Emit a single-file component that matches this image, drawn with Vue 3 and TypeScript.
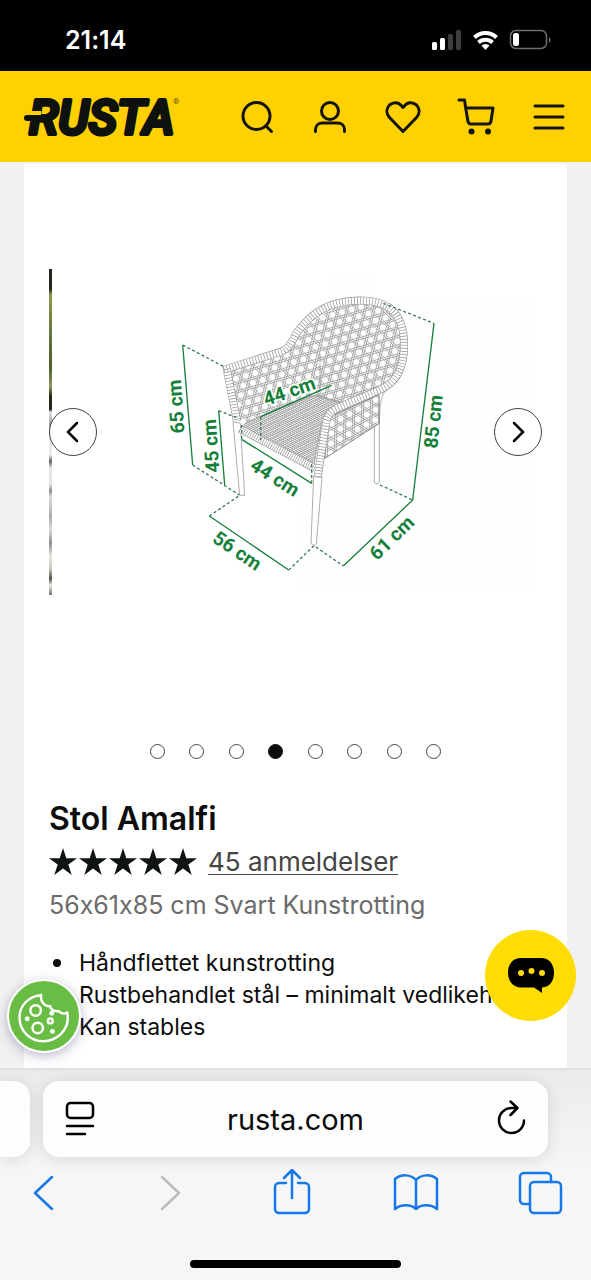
<script setup lang="ts">
import { ref } from 'vue'

const slideCount = 8
const current = ref(3)
const move = (step: number) => {
  current.value = (current.value + step + slideCount) % slideCount
}

const address = ref('rusta.com')
const features: string[] = [
  'Håndflettet kunstrotting',
  'Rustbehandlet stål – minimalt vedlikeh',
  'Kan stables',
]

interface Measure { text: string; x: number; y: number; angle: number }
const measures: Measure[] = [
  { text: '65 cm', x: 78, y: 440, angle: -94 },
  { text: '45 cm', x: 183, y: 558, angle: -94 },
  { text: '44 cm', x: 418, y: 393, angle: -19 },
  { text: '44 cm', x: 375, y: 652, angle: 32 },
  { text: '56 cm', x: 262, y: 872, angle: 34 },
  { text: '61 cm', x: 725, y: 833, angle: -44 },
  { text: '85 cm', x: 850, y: 485, angle: -84 },
]

// Paired strands in three directions leave the hexagonal holes of woven cane.
function weave(cx: number, cy: number, tilt: number, spacing: number, gap: number): string {
  const reach = 340
  const parts: string[] = []
  ;[0, 60, 120].forEach((turn, family) => {
    const a = ((tilt + turn) * Math.PI) / 180
    const dx = Math.cos(a)
    const dy = Math.sin(a)
    for (let k = -14; k <= 14; k++) {
      for (const side of [-1, 1]) {
        const off = (k + (family === 1 ? 0.5 : 0)) * spacing + side * gap
        const x = cx - dy * off
        const y = cy + dx * off
        parts.push(
          `M${(x - dx * reach).toFixed(1)} ${(y - dy * reach).toFixed(1)}L${(x + dx * reach).toFixed(1)} ${(y + dy * reach).toFixed(1)}`,
        )
      }
    }
  })
  return parts.join('')
}
const backWeave = weave(500, 300, -16, 26, 3)
const sideWeave = weave(610, 500, -28, 26, 3)
</script>

<template>
  <div class="phone">
    <div class="status">
      <span class="time">21:14</span>
      <svg class="status-icons" viewBox="0 0 120 24" width="120" height="24" aria-hidden="true">
        <rect x="0" y="14" width="5" height="8" rx="1.5" fill="#fff" />
        <rect x="8" y="10" width="5" height="12" rx="1.5" fill="#fff" />
        <rect x="16" y="6" width="5" height="16" rx="1.5" fill="#3c3c3c" />
        <rect x="24" y="2" width="5" height="20" rx="1.5" fill="#3c3c3c" />
        <g fill="none" stroke="#fff" stroke-width="4">
          <path d="M42.500 9.500a16 16 0 0 1 22 0" />
          <path d="M46.500 14.500a10.500 10.500 0 0 1 14 0" />
        </g>
        <path d="M49.500 17.500a6 6 0 0 1 8 0L53.500 22z" fill="#fff" />
        <rect x="78.500" y="2.500" width="36" height="18" rx="5.500" fill="none" stroke="#6e6e6e" stroke-width="1.500" />
        <path d="M117 9v6c2-1 2-5 0-6z" fill="#6e6e6e" />
        <rect x="81" y="5" width="6" height="13" rx="2.500" fill="#fff" />
      </svg>
    </div>

    <header class="header">
      <a class="brand" href="#" aria-label="Rusta">
        <svg viewBox="0 0 170 64" width="170" height="64">
          <text class="wordmark" x="7" y="49">RUSTA</text>
          <path d="M2 31H19" stroke="#ffd103" stroke-width="10" />
          <path d="M5 33H26" stroke="#0d120e" stroke-width="6" stroke-linecap="round" />
          <text class="registered" x="151" y="19">®</text>
        </svg>
      </a>
      <nav class="tools" aria-label="Butikk">
        <button type="button" aria-label="Søk">
          <svg viewBox="0 0 40 40"><ellipse cx="19.500" cy="19" rx="13.500" ry="13.500" /><path d="M29 29l5.500 5.500" /></svg>
        </button>
        <button type="button" aria-label="Min side">
          <svg viewBox="0 0 40 40"><circle cx="20" cy="14" r="8.500" /><path d="M5.500 34.500v-2c0-4 3-6.500 7-6.500h15c4 0 7 2.500 7 6.500v2" /></svg>
        </button>
        <button type="button" aria-label="Favoritter">
          <svg viewBox="0 0 40 40"><path d="M20 34.500L6.500 20.500C3 16.500 3 11.500 6.500 8c4-3.500 9-3 12 .8L20 10.500l1.500-1.700c3-3.800 8-4.300 12-.8 3.500 3.500 3.500 8.500 0 12.500z" /></svg>
        </button>
        <button type="button" aria-label="Handlekurv">
          <svg viewBox="0 0 40 40"><path d="M3 3h5.500l1.200 8M9.700 11H37l-2 13c-.3 2-1.200 3-3 3H15c-1.800 0-2.800-1-3.100-3z" /><circle class="solid" cx="15.500" cy="34.500" r="3" /><circle class="solid" cx="32" cy="34.500" r="3" /></svg>
        </button>
        <button type="button" aria-label="Meny">
          <svg viewBox="0 0 40 40"><path d="M6 9h28M6 20h28M6 31h28" /></svg>
        </button>
      </nav>
    </header>

    <main class="page">
      <article class="card">
        <section class="stage" aria-label="Produktbilder">
          <div class="previous-slide"></div>
          <svg class="slide" viewBox="-294 27 1470 978" role="img" aria-label="Målskisse av Stol Amalfi">
            <defs>
              <clipPath id="backShape">
                <path d="M238 334L400 286Q425 277 446 232C475 190 520 158 562 143C615 128 675 130 710 152C745 178 756 225 751 278C744 330 724 365 680 384L585 432L492 405L290 486L263 478z" />
              </clipPath>
              <clipPath id="sideShape">
                <path d="M538 470L687 404L688 490L523 596L525 500z" />
              </clipPath>
              <pattern id="seat" width="10" height="7" patternUnits="userSpaceOnUse" patternTransform="matrix(0.880 0.480 -0.900 0.420 0 0)">
                <path d="M0 2H10" stroke="#555" stroke-width="2" /><path d="M2 0V7" stroke="#888" stroke-width="1.500" />
              </pattern>
            </defs>
            <path d="M150 390H240V40H370V120H852V990H150z" transform="translate(300 0)" fill="#fefefe" />

            <g fill="#fff" stroke="#999" stroke-width="2.400" stroke-linejoin="round">
              <path d="M706 392C690 415 689 440 688 490V666Q681 678 673 666V500L668 420" />
              <path d="M249 485L269 706H284L271 490z" />
            </g>
            <g clip-path="url(#backShape)">
              <path :d="backWeave" fill="none" stroke="#757575" stroke-width="1.500" />
            </g>
            <path d="M492 406L585 433L535 465L515 490L492 612L276 500L290 486z" fill="#fff" />
            <path d="M492 406L585 433L535 465L515 490L492 612L276 500L290 486z" fill="url(#seat)" stroke="#888" stroke-width="2" />
            <path d="M510 280V395M500 405L590 432" stroke="#888" stroke-width="2" fill="none" />
            <path d="M538 470L687 404L688 490L523 596L525 500z" fill="#fff" stroke="#888" stroke-width="3" />
            <g clip-path="url(#sideShape)">
              <path :d="sideWeave" fill="none" stroke="#757575" stroke-width="1.500" />
            </g>

            <g fill="none">
              <g stroke="#999" stroke-width="24">
                <path d="M220 330L396 274Q418 266 437 224C465 182 508 146 558 131C616 116 680 118 718 143C754 170 766 220 761 280C756 335 735 370 688 390L558 446Q532 458 528 488L503 650" />
                <path d="M230 325L261 484" /><path d="M270 506L494 625" />
              </g>
              <g stroke="#fff" stroke-width="20">
                <path d="M222 329L396 274Q418 266 437 224C465 182 508 146 558 131C616 116 680 118 718 143C754 170 766 220 761 280C756 335 735 370 688 390L558 446Q532 458 528 488L503 648" />
                <path d="M230 327L261 483" /><path d="M271 507L493 624" />
              </g>
              <g stroke="#909090" stroke-width="21" stroke-dasharray="2 7">
                <path d="M222 329L396 274Q418 266 437 224C465 182 508 146 558 131C616 116 680 118 718 143C754 170 766 220 761 280C756 335 735 370 688 390L558 446Q532 458 528 488L503 648" />
                <path d="M230 327L261 483" /><path d="M271 507L493 624" stroke-dasharray="2 5" />
              </g>
            </g>
            <path d="M491 650L483 848Q491 862 499 852L516 652z" fill="#fff" stroke="#999" stroke-width="2.400" />

            <g class="dash">
              <path d="M98 255L222 320M128 615L268 705M206 452L265 475M275 495V538M485 670V612M332 470V540M178 768L268 707M416 930L492 857L580 918M700 130L852 190M690 675L788 720" />
            </g>
            <g class="rule">
              <path d="M98 255L128 615M206 452L224 675M275 538L485 670M332 470L545 376M178 768L416 930M580 918L788 720L852 190" />
            </g>
            <text
              v-for="(m, i) in measures"
              :key="i"
              class="measure"
              :transform="`translate(${m.x} ${m.y}) rotate(${m.angle})`"
              y="20"
            >{{ m.text }}</text>
          </svg>
          <button class="arrow left" type="button" aria-label="Forrige bilde" @click="move(-1)">
            <svg viewBox="0 0 24 24"><path d="M16 3L7 12l9 9" /></svg>
          </button>
          <button class="arrow right" type="button" aria-label="Neste bilde" @click="move(1)">
            <svg viewBox="0 0 24 24"><path d="M8 3l9 9-9 9" /></svg>
          </button>
        </section>

        <div class="dots">
          <button
            v-for="n in slideCount"
            :key="n"
            type="button"
            :class="{ active: n - 1 === current }"
            :aria-label="`Bilde ${n}`"
            @click="current = n - 1"
          ></button>
        </div>

        <h1>Stol Amalfi</h1>
        <div class="rating">
          <span class="stars" role="img" aria-label="5 av 5 stjerner">
            <svg v-for="n in 5" :key="n" viewBox="0 0 28 27" width="28" height="27">
              <path d="M14 0l3.300 10.300H28l-8.700 6.300L22.700 27 14 20.600 5.300 27l3.400-10.400L0 10.300h10.700z" />
            </svg>
          </span>
          <a href="#">45 anmeldelser</a>
        </div>
        <p class="variant">56x61x85 cm Svart Kunstrotting</p>
        <ul class="features">
          <li v-for="f in features" :key="f">{{ f }}</li>
        </ul>
      </article>

      <button class="cookie" type="button" aria-label="Informasjonskapsler">
        <svg viewBox="0 0 100 100" fill="none" stroke="#fff" stroke-width="3.500">
          <path d="M46 20C28 22 15 35 15 52c0 19 15 34 34 34s35-15 35-33c0-3 0-5-1-8-4 2-9 2-12-2-7 1-12-3-12-7-8 1-15-7-13-16z" stroke-linejoin="round" />
          <circle cx="38" cy="42" r="7.500" /><circle cx="41" cy="67" r="7.500" /><circle cx="59" cy="57" r="3.500" />
          <g fill="#fff" stroke="none"><circle cx="61" cy="46" r="3.500" /><circle cx="26" cy="54" r="3.500" /><circle cx="62" cy="72" r="3.500" /></g>
        </svg>
      </button>
      <button class="chat" type="button" aria-label="Chat">
        <svg viewBox="0 0 48 38">
          <path d="M14 1h20c8 0 13 6 13 14.500S43 30 35 30.500V36L27 30.500H14C6 30.500 1 24 1 15.500S6 1 14 1z" fill="#000" />
          <g fill="#ffdc04"><circle cx="14" cy="16" r="3" /><circle cx="24.500" cy="14" r="3" /><circle cx="35" cy="16" r="3" /></g>
        </svg>
      </button>
    </main>

    <footer class="browser">
      <div class="tabs">
        <div class="other-tab"></div>
        <div class="tab">
          <button type="button" aria-label="Sideinnstillinger">
            <svg viewBox="0 0 36 40"><rect x="5" y="4" width="26" height="15" rx="3.500" /><path d="M5 27h26M5 35h18" /></svg>
          </button>
          <input v-model="address" type="text" aria-label="Adresse" />
          <button type="button" aria-label="Last inn på nytt">
            <svg viewBox="0 0 36 40"><path d="M31 21.500A12.500 12.500 0 1 1 18.500 9H24M17.500 2.500L24.500 9l-7 7" /></svg>
          </button>
        </div>
      </div>
      <nav class="actions" aria-label="Nettleser">
        <button type="button" aria-label="Tilbake"><svg viewBox="0 0 48 48"><path d="M32 8L15 24l17 16" /></svg></button>
        <button type="button" aria-label="Frem" disabled><svg viewBox="0 0 48 48"><path d="M18 8l17 16-17 16" /></svg></button>
        <button type="button" aria-label="Del"><svg viewBox="0 0 48 48"><path d="M18 14h-7a4 4 0 0 0-4 4v22a4 4 0 0 0 4 4h26a4 4 0 0 0 4-4V18a4 4 0 0 0-4-4h-7M24 29V2M16 9l8-8 8 8" /></svg></button>
        <button type="button" aria-label="Bokmerker"><svg viewBox="0 0 48 48"><path d="M24 11C19 5 9 5 3 10v30c6-5 16-5 21 0 5-5 15-5 21 0V10C39 5 29 5 24 11zM24 11v29" /></svg></button>
        <button type="button" aria-label="Faner"><svg viewBox="0 0 48 48"><path d="M14 35H8a4 4 0 0 1-4-4V8a4 4 0 0 1 4-4h23a4 4 0 0 1 4 4v5" /><rect x="14" y="13" width="31" height="31" rx="4" /></svg></button>
      </nav>
      <div class="home"></div>
    </footer>
  </div>
</template>

<style>
body {
  margin: 0;
}
</style>

<style scoped>
.phone {
  display: flex;
  flex-direction: column;
  min-height: 100vh;
  background: #f1f1f1;
  color: #0d0d0d;
  font-family: Inter, "Open Sans", sans-serif;
  font-feature-settings: "calt" 0;
  overflow: hidden;
}
button {
  padding: 0;
  border: 0;
  background: none;
  color: inherit;
  cursor: pointer;
}
svg {
  display: block;
}
.status {
  display: flex;
  align-items: center;
  justify-content: space-between;
  box-sizing: border-box;
  height: 71px;
  padding: 8px 39px 0 65px;
  background: #000;
  color: #fff;
}
.time {
  font-size: 25px;
  font-weight: 600;
}
.header {
  display: flex;
  align-items: center;
  justify-content: space-between;
  height: 91px;
  padding: 0 22px;
  background: #ffd103;
}
.wordmark {
  font: italic 500 48px Roboto, sans-serif;
  fill: #0d120e;
  stroke: #0d120e;
  stroke-width: 4px;
  stroke-linejoin: round;
}
.registered {
  font: 8px Roboto, sans-serif;
  fill: #5a4b08;
}
.tools {
  display: flex;
  gap: 33px;
}
.tools svg {
  width: 40px;
  height: 40px;
  fill: none;
  stroke: #14140f;
  stroke-width: 3px;
  stroke-linecap: round;
  stroke-linejoin: round;
}
.tools .solid {
  fill: #14140f;
  stroke: none;
}
.page {
  position: relative;
  display: flex;
  flex: 1;
  padding: 2px 24px 0;
}
.card {
  flex: 1;
  min-width: 0;
  padding: 0 25px 23px;
  background: #fff;
}
.stage {
  position: relative;
  display: flex;
  align-items: center;
  height: 536px;
}
.previous-slide {
  width: 3px;
  height: 326px;
  background: linear-gradient(#20241a 0 6%, #8a9a4c 8%, #66773a 20%, #4c5c2a 30%, #8b9a5e 36%, #252c18 39%, #20261a 43%, #dfe3e0 44%, #9a9f98 48%, #e4e8e6 52%, #e8ecec 57%, #5f665a 59%, #e2e8ea 61%, #e2e6e6 66%, #8d918c 68%, #dcdedb 70%, #a9aca8 76%, #dedfdb 80%, #8d8f88 84%, #e6e5df 88%, #c9c6bd 92%, #55504a 95%, #eceae4 97%, #77746e);
}
.slide {
  flex: 1;
  min-width: 0;
  height: 326px;
}
.rule path,
.dash path {
  fill: none;
  stroke: #15803a;
  stroke-width: 4px;
}
.dash path {
  stroke: #3d7a58;
  stroke-dasharray: 9 7;
}
.measure {
  font: 700 58px Roboto, sans-serif;
  text-anchor: middle;
  fill: #15803a;
  stroke: #fff;
  stroke-width: 10px;
  stroke-linejoin: round;
  paint-order: stroke;
}
.arrow {
  position: absolute;
  top: 50%;
  display: grid;
  place-items: center;
  box-sizing: border-box;
  width: 48px;
  height: 48px;
  margin-top: -24px;
  border: 1px solid #444;
  border-radius: 50%;
  background: #fff;
}
.arrow.left {
  left: 0;
}
.arrow.right {
  right: 0;
}
.arrow svg {
  width: 24px;
  height: 24px;
  fill: none;
  stroke: #000;
  stroke-width: 2.500px;
  stroke-linecap: round;
}
.dots {
  display: flex;
  justify-content: space-between;
  width: 291px;
  margin: 0 auto;
  padding: 44px 0 42px;
}
.dots button {
  box-sizing: border-box;
  width: 15px;
  height: 15px;
  border: 1px solid #444;
  border-radius: 50%;
}
.dots .active {
  border-color: #0d0d0d;
  background: #0d0d0d;
}
h1 {
  margin: 0;
  font-size: 32px;
  font-weight: 600;
  line-height: 36px;
}
.rating {
  display: flex;
  align-items: center;
  gap: 11px;
  height: 36px;
  margin-top: 6px;
}
.stars {
  display: flex;
  gap: 2px;
  fill: #0f1410;
}
.rating a {
  color: #444;
  font-size: 26px;
  text-decoration-thickness: 1px;
  text-underline-offset: 3px;
}
.variant {
  margin: 8px 0 24px;
  color: #6b6b6b;
  font-size: 25px;
  line-height: 36px;
}
.features {
  margin: 0;
  padding: 0;
  font-size: 23px;
  line-height: 32px;
  list-style: none;
  white-space: nowrap;
}
.features li {
  display: flex;
  align-items: center;
  gap: 18px;
  padding-left: 4px;
}
.features li::before {
  width: 8px;
  height: 8px;
  border-radius: 50%;
  background: #0d0d0d;
  content: "";
}
.cookie {
  position: absolute;
  bottom: 15px;
  left: 7px;
  box-sizing: border-box;
  width: 74px;
  height: 74px;
  border: 2px solid #fff;
  border-radius: 50%;
  background: #69bd45;
  box-shadow: 0 3px 12px rgba(60, 50, 100, 0.35);
}
.cookie svg {
  width: 70px;
  height: 70px;
}
.chat {
  position: absolute;
  right: 15px;
  bottom: 47px;
  display: grid;
  place-items: center;
  width: 91px;
  height: 91px;
  border-radius: 50%;
  background: #ffdc04;
}
.chat svg {
  width: 48px;
  height: 38px;
}
.browser {
  position: relative;
  padding: 11px 0 12px;
  border-top: 2px solid #dfdfdf;
  background: linear-gradient(#ebebeb, #f6f6f6 100px);
}
.tabs {
  display: flex;
  gap: 13px;
  padding-right: 43px;
}
.other-tab,
.tab {
  height: 76px;
  background: #fdfdfd;
  box-shadow: 0 2px 16px rgba(0, 0, 0, 0.12);
}
.other-tab {
  width: 30px;
  border-radius: 0 16px 16px 0;
}
.tab {
  display: flex;
  flex: 1;
  align-items: center;
  justify-content: space-between;
  box-sizing: border-box;
  min-width: 0;
  padding: 0 19px;
  border-radius: 16px;
}
.tab svg {
  width: 36px;
  height: 40px;
  fill: none;
  stroke: #000;
  stroke-width: 2.500px;
  stroke-linecap: round;
  stroke-linejoin: round;
}
.tab input {
  flex: 1;
  min-width: 0;
  border: 0;
  background: none;
  color: #0a0a0a;
  font: 29px Inter, sans-serif;
  text-align: center;
}
.actions {
  display: flex;
  justify-content: space-between;
  padding: 12px 27px 0 20px;
  color: #1677e8;
}
.actions svg {
  width: 48px;
  height: 48px;
  fill: none;
  stroke: currentColor;
  stroke-width: 2.500px;
  stroke-linecap: round;
  stroke-linejoin: round;
}
.actions button:disabled {
  color: #bcbcbe;
}
.home {
  width: 211px;
  height: 8px;
  margin: 43px auto 0;
  border-radius: 4px;
  background: #000;
}
</style>
